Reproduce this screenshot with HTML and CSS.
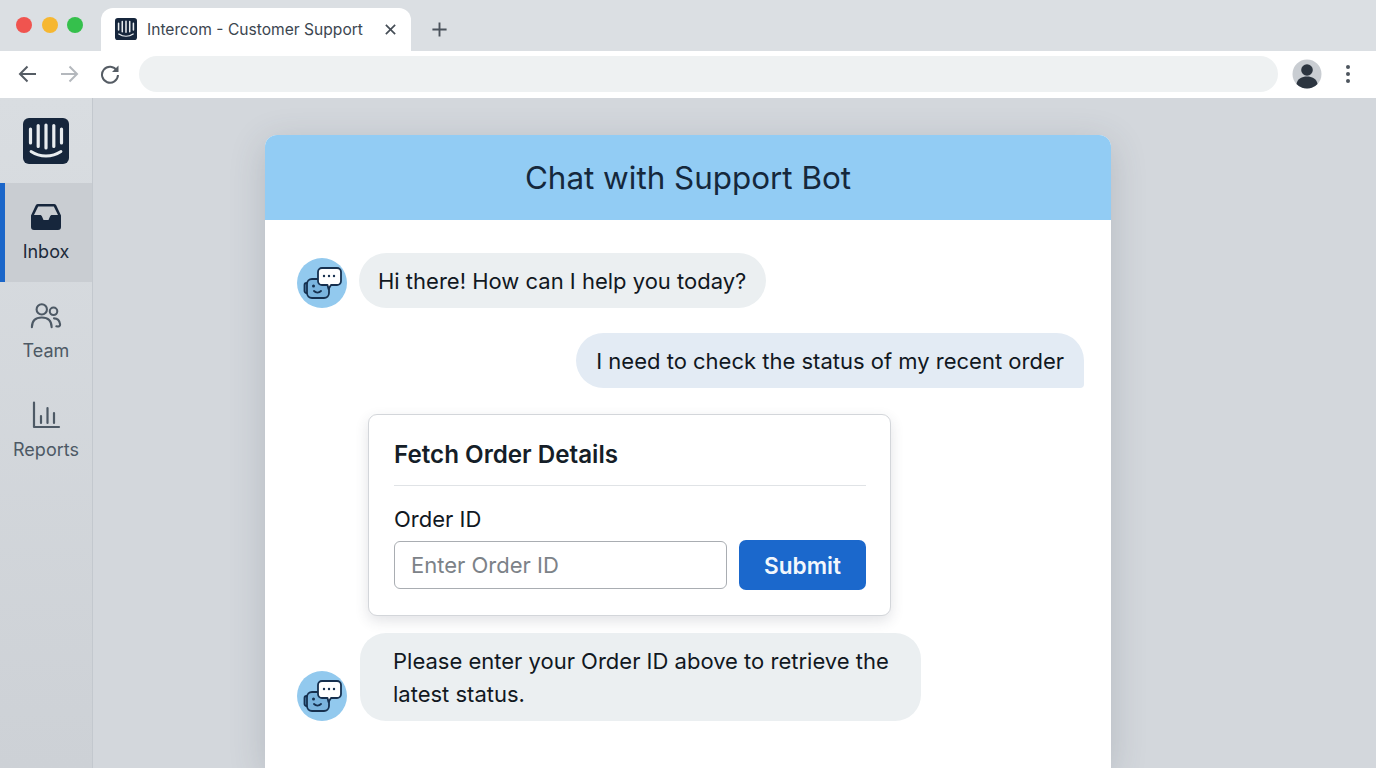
FILE: index.html
```html
<!DOCTYPE html>
<html lang="en">
<head>
<meta charset="UTF-8">
<title>Intercom - Customer Support</title>
<link rel="stylesheet" href="styles.css">
</head>
<body>
<svg class="defs" width="0" height="0">
  <symbol id="logo" viewBox="0 0 46 46">
    <rect width="46" height="46" rx="6" fill="#16263c"/>
    <g fill="none" stroke="#e8ecef" stroke-linecap="round">
      <path d="M7.500 11v14M15.200 7.500v21M23 7v23M30.800 7.500v21M38.500 11v14" stroke-width="3.200"/>
      <path d="M8 33.500c9 6 21 6 30 0" stroke-width="2.800"/>
    </g>
  </symbol>
  <symbol id="bot" viewBox="0 0 50 50">
    <circle cx="25" cy="25" r="25" fill="#92c9ee"/>
    <g fill="none" stroke="#16304f" stroke-width="1.800" stroke-linejoin="round" stroke-linecap="round">
      <rect x="7.500" y="25" width="4" height="10" rx="2" fill="#5b93bf"/>
      <rect x="10" y="21" width="22" height="19" rx="5" fill="#7ab4de"/>
      <path d="M25 10h15a4 4 0 0 1 4 4v9a4 4 0 0 1-4 4h-6l-2.500 4-1-4H25a4 4 0 0 1-4-4v-9a4 4 0 0 1 4-4z" fill="#fff"/>
      <path d="M17 33c2 2 5 2 7 0"/>
    </g>
    <g fill="#16304f">
      <circle cx="16.500" cy="28" r="1.500"/>
      <circle cx="27" cy="18" r="1.200"/><circle cx="32" cy="18" r="1.200"/><circle cx="37" cy="18" r="1.200"/>
    </g>
  </symbol>
</svg>

<div class="tabbar">
  <div class="lights">
    <span class="light red"></span>
    <span class="light yellow"></span>
    <span class="light green"></span>
  </div>
  <div class="tab">
    <svg class="tab-logo"><use href="#logo"/></svg>
    <span class="tab-title">Intercom - Customer Support</span>
    <svg class="tab-close" viewBox="0 0 14 14"><path d="M2 2l10 10M12 2L2 12"/></svg>
  </div>
  <svg class="new-tab" viewBox="0 0 18 18"><path d="M9 1.500v15M1.500 9h15"/></svg>
</div>

<div class="toolbar">
  <svg class="nav-icon" viewBox="0 0 20 20"><path d="M18 10H2.500M9.500 2.500L2 10l7.500 7.500"/></svg>
  <svg class="nav-icon off" viewBox="0 0 20 20"><path d="M2 10h15.500M10.500 2.500L18 10l-7.500 7.500"/></svg>
  <svg class="nav-icon" viewBox="0 0 20 20"><path d="M16.800 6.500A8 8 0 1 0 18 11"/><path class="solid" d="M18.500 1.500v6.500h-6.500z"/></svg>
  <div class="address"></div>
  <svg class="profile" viewBox="0 0 30 30">
    <circle cx="15" cy="15" r="14.500" fill="#c9cdd2"/>
    <circle cx="15" cy="11" r="5.800" fill="#2c3540"/>
    <path d="M4.500 25c1-5.500 5.500-7.500 10.500-7.500s9.500 2 10.500 7.500a14.500 14.500 0 0 1-21 0z" fill="#2c3540"/>
  </svg>
  <div class="menu-dots"><i></i><i></i><i></i></div>
</div>

<div class="app">
  <nav class="sidebar">
    <svg class="side-logo"><use href="#logo"/></svg>
    <a class="side-item active">
      <svg viewBox="0 0 32 28"><path class="inbox-fill" d="M8 1h16a2.500 2.500 0 0 1 2.200 1.300L31 12.500V24a3 3 0 0 1-3 3H4a3 3 0 0 1-3-3V12.500L5.800 2.300A2.500 2.500 0 0 1 8 1zM8.200 3.500L4 12h6c1 0 1.500.5 2 1.500l1.500 3.500h5l1.500-3.500c.5-1 1-1.500 2-1.500h6l-4.200-8.500z"/></svg>
      <span>Inbox</span>
    </a>
    <a class="side-item">
      <svg class="line" viewBox="0 0 34 28"><circle cx="12.500" cy="7" r="5.500"/><circle cx="25" cy="9" r="4"/><path d="M2 26c0-7 4-10.500 10.500-10.500S23 19 23 26"/><path d="M25.500 16.500c3.500 0 6 2.500 6.500 6.500 .2 2-1.500 2.500-4 2"/></svg>
      <span>Team</span>
    </a>
    <a class="side-item">
      <svg class="line" viewBox="0 0 30 28"><path d="M3 1.500v24.500h25"/><path d="M10 15v7M16.500 7v15M23 12v10"/></svg>
      <span>Reports</span>
    </a>
  </nav>

  <main class="stage">
    <section class="chat">
      <header class="chat-head">Chat with Support Bot</header>
      <div class="messages">
        <div class="msg bot">
          <svg class="avatar"><use href="#bot"/></svg>
          <div class="bubble">Hi there! How can I help you today?</div>
        </div>
        <div class="msg user">
          <div class="bubble">I need to check the status of my recent order</div>
        </div>
        <form class="order-card">
          <h3>Fetch Order Details</h3>
          <label for="order-id">Order ID</label>
          <div class="order-row">
            <input id="order-id" type="text" placeholder="Enter Order ID">
            <button type="button">Submit</button>
          </div>
        </form>
        <div class="msg bot">
          <svg class="avatar"><use href="#bot"/></svg>
          <div class="bubble wide">Please enter your Order ID above to retrieve the latest status.</div>
        </div>
      </div>
    </section>
  </main>
</div>
</body>
</html>
```

FILE: styles.css
```css
* { box-sizing:border-box; }
html, body { height:100%; }
body { margin:0; height:768px; overflow:hidden; font-family:Inter,'Noto Sans',sans-serif; color:#11181f; background:#d3d7dc; display:flex; flex-direction:column; }
.defs { position:absolute; }

/* browser chrome */
.tabbar { height:51px; flex:none; background:#dbdfe3; display:flex; align-items:flex-end; padding-left:16px; }
.lights { display:flex; gap:9.500px; align-self:flex-start; padding-top:17px; width:85px; }
.light { width:16px; height:16px; border-radius:50%; }
.red { background:#f0544f; }
.yellow { background:#f6b731; }
.green { background:#35c04c; }
.tab { width:310px; height:43px; background:#fff; border-radius:12px 12px 0 0; display:flex; align-items:center; padding:0 14px 1px 14px; }
.tab-logo { width:22px; height:22px; flex:none; }
.tab-title { margin-left:10px; font-size:15.600px; color:#3c4650; white-space:nowrap; flex:1; }
.tab-close { width:13px; height:13px; fill:none; stroke:#454d56; stroke-width:1.800; }
.new-tab { width:17px; height:17px; margin:0 0 13px 20px; fill:none; stroke:#4b535c; stroke-width:2; }

.toolbar { height:47px; flex:none; background:#fff; display:flex; align-items:center; padding:0 20px 1px 18px; }
.nav-icon { width:20px; height:20px; margin-right:21px; fill:none; stroke:#555c64; stroke-width:2; }
.nav-icon.off { stroke:#b4b8bd; }
.nav-icon .solid { fill:#555c64; stroke:none; }
.address { width:1139px; height:36px; margin-left:-2px; border-radius:18px; background:#eef1f2; }
.profile { width:30px; height:30px; margin-left:14px; }
.menu-dots { margin-left:24px; display:flex; flex-direction:column; gap:3px; }
.menu-dots i { width:4px; height:4px; border-radius:50%; background:#4d555e; }

.app { flex:1; display:flex; min-height:0; }

/* left rail */
.sidebar { width:93px; flex:none; background:linear-gradient(#d9dde1,#cdd1d6); border-right:1px solid #c3c8ce; display:flex; flex-direction:column; padding-top:20px; }
.side-logo { width:46px; height:46px; margin:0 0 19px 23px; }
.side-item { height:99px; display:flex; flex-direction:column; align-items:center; color:#4d5965; font-size:18px; padding-top:20px; gap:10px; }
.side-item svg { width:32px; height:28px; }
.side-item.active { background:#c9cdd2; border-left:5px solid #1b66c9; padding-right:5px; color:#1c2a3a; }
.inbox-fill { fill:#16263c; fill-rule:evenodd; }
.line { fill:none; stroke:#4d5965; stroke-width:2.200; stroke-linecap:round; stroke-linejoin:round; }

/* chat window */
.stage { flex:1; min-width:0; padding:37px 0 0 172px; }
.chat { width:846px; height:100%; background:#fff; border-radius:12px 12px 0 0; box-shadow:0 8px 36px rgba(60,70,85,.2); }
.chat-head { height:85px; background:#92ccf4; border-radius:12px 12px 0 0; display:flex; align-items:center; justify-content:center; font-size:31.400px; color:#15283c; padding-top:1px; }
.messages { padding:33px 27px 0 32px; display:flex; flex-direction:column; }
.msg { display:flex; align-items:flex-end; gap:12px; }
.msg.user { justify-content:flex-end; margin-top:25px; }
.avatar { width:50px; height:50px; flex:none; }
.bubble { font-size:22px; line-height:33px; color:#11181f; background:#ebeff1; border-radius:28px; padding:12px 20px 10px 19px; }
.user .bubble { background:#e3ebf4; border-radius:28px 28px 4px 28px; padding:12px 20px 10px; }
.bubble.wide { width:561px; margin-left:1px; padding:12px 25px 10px 33px; border-radius:26px; }

/* tool form */
.order-card { width:523px; height:202px; margin:26px 0 17px 71px; padding:23px 24px 0 25px; background:#fff; border:1px solid #d3d6da; border-radius:9px; box-shadow:0 5px 14px rgba(50,60,75,.14); }
.order-card h3 { margin:0; padding-bottom:14px; font-size:24.200px; line-height:33px; font-weight:600; color:#151e28; border-bottom:1px solid #e0e3e6; }
.order-card label { display:block; margin-top:17px; font-size:22px; line-height:33px; }
.order-row { display:flex; gap:12px; margin-top:4px; }
.order-row input { width:333px; height:48px; margin-top:1px; padding:0 16px; font:22px Inter,'Noto Sans',sans-serif; border:1.500px solid #a9adb2; border-radius:6px; background:#fff; outline:none; }
.order-row input::placeholder { color:#7c8288; opacity:1; }
.order-row button { width:127px; height:50px; border:none; border-radius:7px; background:#1b68cc; color:#f2f7fc; font:600 22.600px Inter,'Noto Sans',sans-serif; }
```
